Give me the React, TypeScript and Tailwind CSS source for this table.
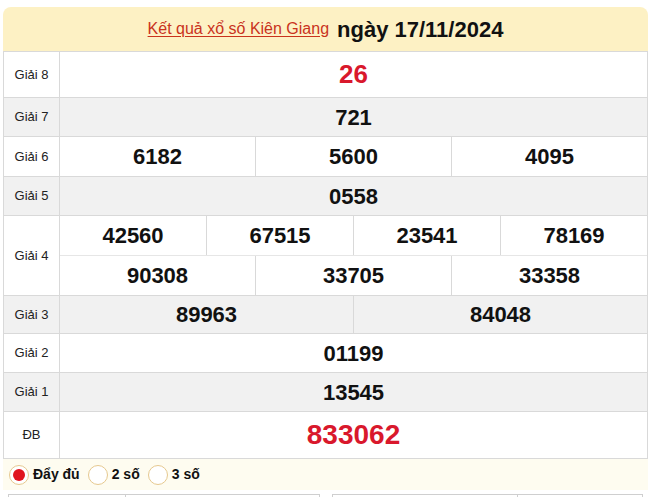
import React from "react";

const font = { fontFamily: '"Liberation Sans", Arial, sans-serif' };

function Row({
  label,
  h,
  gray,
  children,
}: {
  label: string;
  h: string;
  gray?: boolean;
  children: React.ReactNode;
}) {
  return (
    <div className={`flex border-b border-[#d9d9d9] ${h} ${gray ? "bg-[#f1f1f1]" : "bg-white"}`}>
      <div className="w-[56px] shrink-0 flex items-center justify-center border-r border-[#d9d9d9] text-[13px] text-[#222]">
        {label}
      </div>
      <div className="flex-1 flex flex-col">{children}</div>
    </div>
  );
}

function Cells({ nums, cls = "text-[22px] text-[#111]" }: { nums: string[]; cls?: string }) {
  return (
    <div className="flex flex-1">
      {nums.map((n, i) => (
        <div
          key={i}
          className={`flex-1 flex items-center justify-center font-bold ${cls} ${i > 0 ? "border-l border-[#d9d9d9]" : ""}`}
        >
          {n}
        </div>
      ))}
    </div>
  );
}

function Radio({ checked, label }: { checked?: boolean; label: string }) {
  return (
    <div className="flex items-center gap-[4px]">
      <div className="w-[20px] h-[20px] rounded-full border border-[#e6c98f] bg-white flex items-center justify-center">
        {checked && <div className="w-[12px] h-[12px] rounded-full bg-[#e0141e]" />}
      </div>
      <span className="font-bold text-[14px] text-[#111]">{label}</span>
    </div>
  );
}

export default function App() {
  return (
    <div className="w-[651px] h-[497px] bg-white overflow-hidden" style={font}>
      <div className="mx-[3px] mt-[7px] w-[645px]">
        <div className="h-[44px] bg-[#fdf1c4] rounded-t-[8px] flex items-center justify-center gap-[8px]">
          <span className="text-[16px] text-[#c9331d] underline underline-offset-2">Kết quả xổ số Kiên Giang</span>
          <span className="text-[22px] font-bold text-[#111]">ngày 17/11/2024</span>
        </div>
        <div className="border-t border-x border-[#d9d9d9]">
          <Row label="Giải 8" h="h-[46px]">
            <Cells nums={["26"]} cls="text-[26px] text-[#d9182c]" />
          </Row>
          <Row label="Giải 7" h="h-[39px]" gray>
            <Cells nums={["721"]} />
          </Row>
          <Row label="Giải 6" h="h-[40px]">
            <Cells nums={["6182", "5600", "4095"]} />
          </Row>
          <Row label="Giải 5" h="h-[39px]" gray>
            <Cells nums={["0558"]} />
          </Row>
          <Row label="Giải 4" h="h-[80px]">
            <div className="flex flex-1 border-b border-[#e6e6e6]">
              <Cells nums={["42560", "67515", "23541", "78169"]} />
            </div>
            <Cells nums={["90308", "33705", "33358"]} />
          </Row>
          <Row label="Giải 3" h="h-[38px]" gray>
            <Cells nums={["89963", "84048"]} />
          </Row>
          <Row label="Giải 2" h="h-[39px]">
            <Cells nums={["01199"]} />
          </Row>
          <Row label="Giải 1" h="h-[39px]" gray>
            <Cells nums={["13545"]} />
          </Row>
          <Row label="ĐB" h="h-[47px]">
            <Cells nums={["833062"]} cls="text-[28px] text-[#d9182c]" />
          </Row>
        </div>
        <div className="h-[31px] bg-[#fefcf0] flex items-center gap-[8px] pl-[6px]">
          <Radio checked label="Đẩy đủ" />
          <Radio label="2 số" />
          <Radio label="3 số" />
        </div>
        <div className="flex gap-[12px] mt-[4px] px-[5px]">
          <div className="flex-1 h-[20px] border border-[#cfcfcf] flex">
            <div className="w-[117px] border-r border-[#cfcfcf]" />
          </div>
          <div className="flex-1 h-[20px] border border-[#cfcfcf] flex mr-[0px]">
            <div className="w-[185px] border-r border-[#cfcfcf]" />
          </div>
        </div>
      </div>
    </div>
  );
}
